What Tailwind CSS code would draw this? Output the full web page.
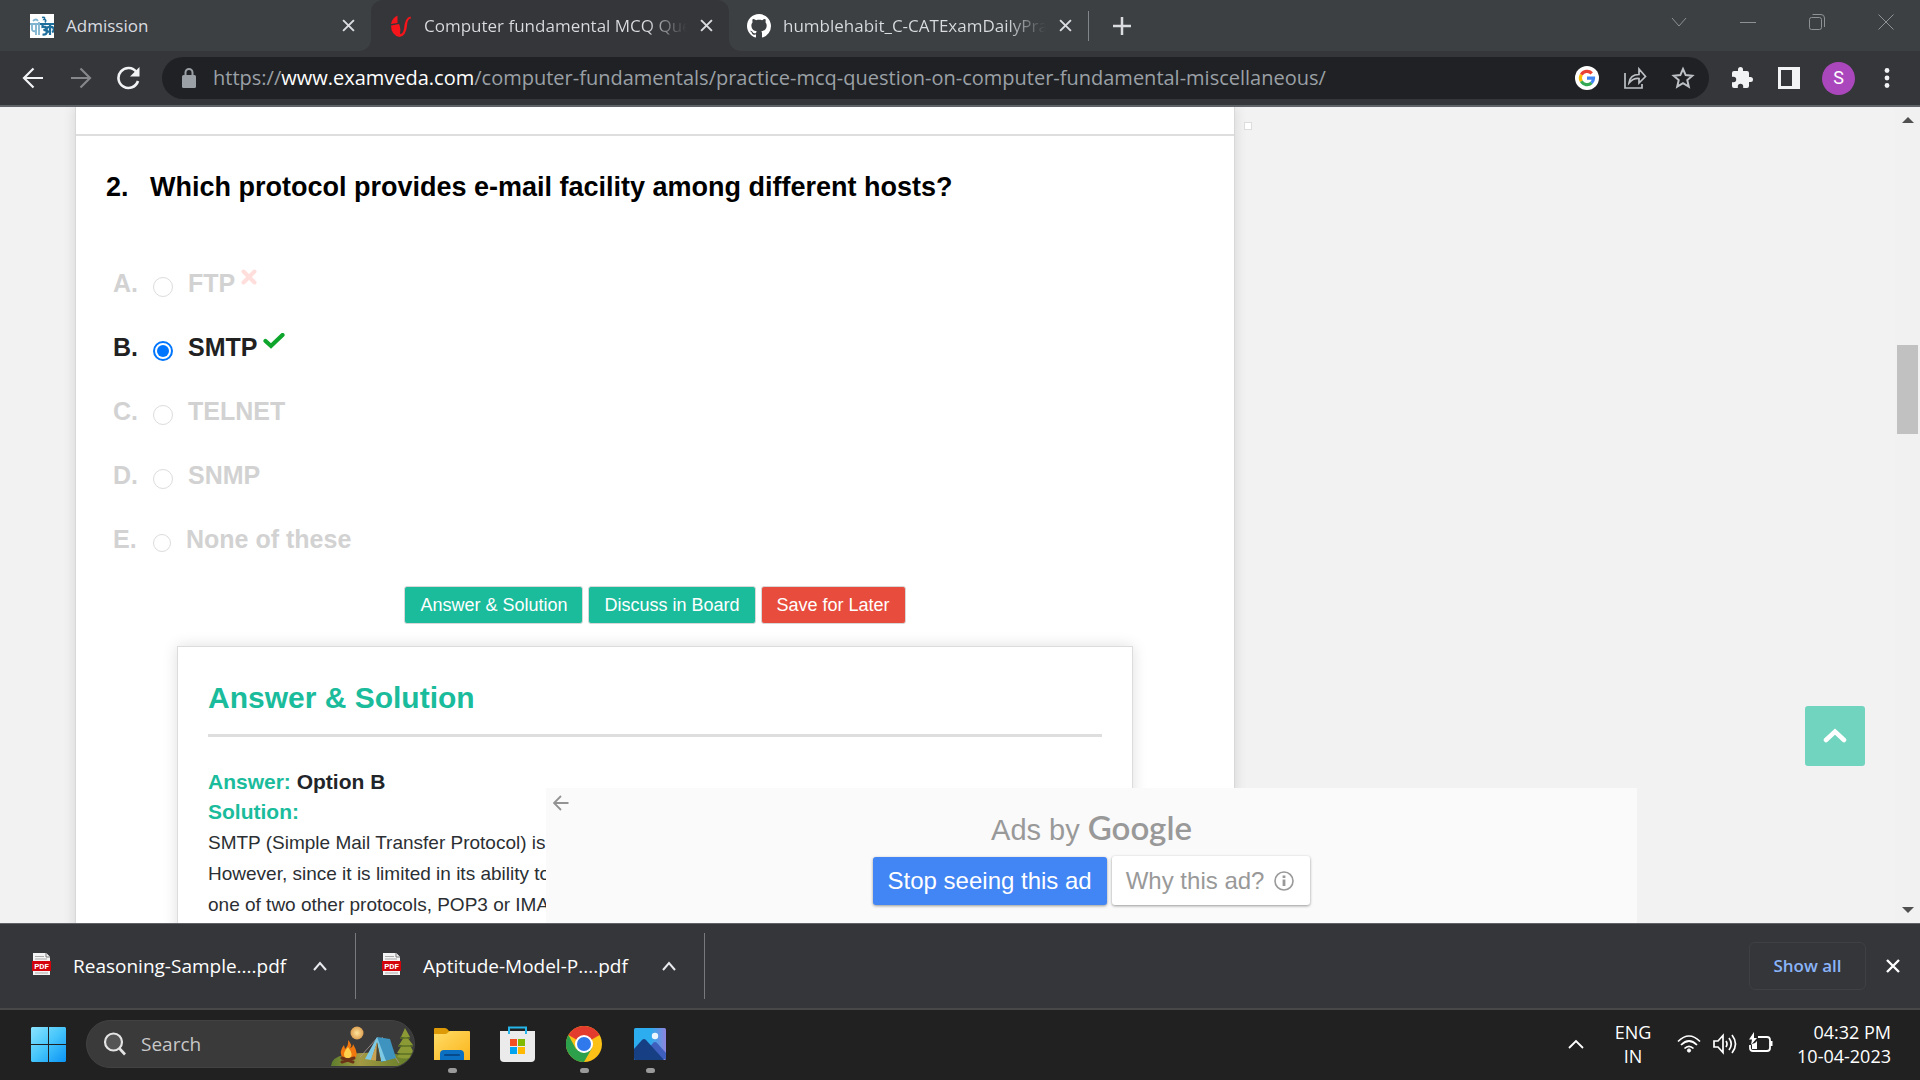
<!DOCTYPE html>
<html lang="en">
<head>
<meta charset="utf-8">
<title>Computer fundamental MCQ Questions</title>
<script src="https://cdn.jsdelivr.net/npm/@tailwindcss/browser@4"></script>
</head>
<body class="h-screen flex flex-col overflow-hidden bg-[#202020] font-['Open_Sans','Noto_Sans',sans-serif] text-[#dadce0]">

<!-- Tab strip -->
<header class="shrink-0 bg-[#35363a]">
  <nav class="h-[51px] flex items-stretch bg-[#35363a]" aria-label="Tabs">
    <div class="w-[371px] shrink-0 flex items-center pl-[30px] pr-[11px] bg-[#3c4043] rounded-br-xl">
      <svg class="size-6 shrink-0" viewBox="0 0 24 24"><rect width="24" height="24" fill="#fff"/><g fill="none" stroke="#7fb4d0" stroke-width="1.800"><path d="M0 10h10M2 10v5q0 3 4 2M6 10v11M9 8v13M3 7q3-3 5 0"/></g><g fill="none" stroke="#1f6f9c" stroke-width="2.200"><path d="M10 10h14M12.500 10v3c5-1 5 2 1 3 5 0 4 5-1 4.500M20 10v11M20 13c-4-1-5 5 0 5M20 13c4-1 5 4 2 5"/><path d="M12 3.500q4-1 2 2 3 0 1 3" stroke-width="1.600"/></g></svg>
      <span class="ml-3 grow text-[17px] leading-6">Admission</span>
      <button aria-label="Close tab" class="size-6 flex items-center justify-center"><svg class="size-[13px]" viewBox="0 0 12 12"><path d="M1 1l10 10M11 1L1 11" stroke="#dadce0" stroke-width="1.800"/></svg></button>
    </div>
    <div class="bg-[#3c4043] flex">
    <div class="w-[358px] shrink-0 flex items-center pl-5 pr-[11px] bg-[#35363a] rounded-t-xl">
      <svg class="w-5 h-6 shrink-0" viewBox="0 0 20 24"><path d="M6.500 1.500V9L0 10Q1 4 6.500 1.500ZM0 11.500L8 10Q10 14 9 20 12 20 13 15 14 3 19.500 2.500L20 4.500Q16.500 4 16 12 15 22 8.500 23 0 21 0 11.500Z" fill="#f5151b"/></svg>
      <span class="ml-[13px] w-[263px] overflow-hidden whitespace-nowrap text-[17px] leading-6 bg-linear-to-r from-[#dadce0] from-85% to-[#35363a] bg-clip-text text-transparent">Computer fundamental MCQ Questions</span>
      <button aria-label="Close tab" class="ml-auto size-6 flex items-center justify-center"><svg class="size-[13px]" viewBox="0 0 12 12"><path d="M1 1l10 10M11 1L1 11" stroke="#dadce0" stroke-width="1.800"/></svg></button>
    </div>
    </div>
    <div class="grow flex items-center bg-[#3c4043] rounded-bl-xl">
      <div class="w-[359px] shrink-0 flex items-center pl-[18px] pr-[11px]">
        <svg class="size-6 shrink-0" viewBox="0 0 16 16" fill="#fff"><path d="M8 0C3.580 0 0 3.580 0 8c0 3.540 2.290 6.530 5.470 7.590.4.070.55-.17.55-.38 0-.19-.01-.82-.01-1.490-2.010.37-2.530-.49-2.690-.94-.09-.23-.48-.94-.82-1.130-.28-.15-.68-.52-.01-.53.63-.01 1.080.58 1.230.82.72 1.210 1.870.87 2.330.66.07-.52.28-.87.51-1.070-1.780-.2-3.640-.89-3.640-3.950 0-.87.31-1.590.82-2.150-.08-.2-.36-1.020.08-2.120 0 0 .67-.21 2.200.82.64-.18 1.320-.27 2-.27s1.360.09 2 .27c1.530-1.040 2.200-.82 2.200-.82.44 1.100.16 1.920.08 2.120.51.56.82 1.270.82 2.150 0 3.070-1.870 3.750-3.650 3.950.29.25.54.73.54 1.480 0 1.070-.01 1.930-.01 2.200 0 .21.15.46.55.38A8.010 8.010 0 0 0 16 8c0-4.420-3.580-8-8-8z"/></svg>
        <span class="ml-3 w-[263px] overflow-hidden whitespace-nowrap text-[17px] leading-6 bg-linear-to-r from-[#dadce0] from-85% to-[#3c4043] bg-clip-text text-transparent">humblehabit_C-CATExamDailyPractice</span>
        <button aria-label="Close tab" class="ml-auto size-6 flex items-center justify-center"><svg class="size-[13px]" viewBox="0 0 12 12"><path d="M1 1l10 10M11 1L1 11" stroke="#dadce0" stroke-width="1.800"/></svg></button>
      </div>
      <div class="w-px h-[30px] bg-[#80868b]"></div>
      <button aria-label="New tab" class="ml-[21px] size-6 flex items-center justify-center"><svg class="size-[18px]" viewBox="0 0 18 18"><path d="M9 0v18M0 9h18" stroke="#dadce0" stroke-width="2.500"/></svg></button>
      <div class="ml-auto mr-[26px] mb-2 flex items-center gap-[53px] text-[#8f9295]">
        <svg class="size-4" viewBox="0 0 16 16" fill="none" stroke="currentColor"><path d="M1 4l7 8 7-8"/></svg>
        <svg class="size-4" viewBox="0 0 16 16" fill="none" stroke="currentColor"><path d="M0 8.500h16"/></svg>
        <svg class="size-4" viewBox="0 0 16 16" fill="none" stroke="currentColor"><rect x=".5" y="3.500" width="12" height="12" rx="2"/><path d="M3.500 .500H12q3.500 0 3.500 3.500v9"/></svg>
        <svg class="size-4" viewBox="0 0 16 16" fill="none" stroke="currentColor"><path d="M.5.500l15 15M15.500.500l-15 15"/></svg>
      </div>
    </div>
  </nav>

  <!-- Toolbar -->
  <div class="h-[56px] flex items-center pl-[21px] pr-[21px] border-b-2 border-[#5f6368]">
    <div class="flex gap-6 text-[#f1f3f4]">
      <button aria-label="Back"><svg class="size-6" viewBox="0 0 24 24" fill="none" stroke="currentColor" stroke-width="2.200"><path d="M22 12H3M12.500 2.500L3 12l9.500 9.500"/></svg></button>
      <button aria-label="Forward" class="text-[#85878a]"><svg class="size-6" viewBox="0 0 24 24" fill="none" stroke="currentColor" stroke-width="2.200"><path d="M2 12h19M11.500 2.500L21 12l-9.500 9.500"/></svg></button>
      <button aria-label="Reload"><svg class="size-6" viewBox="0 0 24 24"><path d="M19.500 6A10 10 0 1 0 21 15" fill="none" stroke="currentColor" stroke-width="2.600"/><path d="M22.500 1v9.500H13z" fill="currentColor"/></svg></button>
    </div>
    <div class="ml-[21px] grow h-[42px] rounded-full bg-[#202124] flex items-center pl-5 pr-3.5">
      <svg class="w-[14px] h-5 shrink-0" viewBox="0 0 14 20"><rect y="7" width="14" height="13" rx="1.500" fill="#9aa0a6"/><path d="M3.500 8V4.500a3.500 3.500 0 0 1 7 0V8" fill="none" stroke="#9aa0a6" stroke-width="2"/></svg>
      <a href="#" class="ml-[17px] whitespace-nowrap text-[20px] leading-7 text-[#9aa0a6]">https://<span class="text-white">www.examveda.com</span>/computer-fundamentals/practice-mcq-question-on-computer-fundamental-miscellaneous/</a>
      <div class="ml-auto flex gap-6">
        <svg class="size-6" viewBox="0 0 24 24"><circle cx="12" cy="12" r="12" fill="#fff"/><g fill="none" stroke-width="3.200"><path d="M6.300 8.700A6.600 6.600 0 0 1 16.800 7.300" stroke="#ea4335"/><path d="M6.300 8.700a6.600 6.600 0 0 0 0 6.600" stroke="#fbbc05"/><path d="M6.300 15.300A6.600 6.600 0 0 0 16.500 16.900" stroke="#34a853"/><path d="M12 12.200h6.500a6.600 6.600 0 0 1-2 4.700" stroke="#4285f4"/></g></svg>
        <svg class="size-6" viewBox="0 0 24 24" fill="none" stroke="#bdc1c6" stroke-width="1.700"><path d="M2 7v15h17v-4M6 17Q7 8.500 16 8.500V3l6.500 7.500L16 17v-4.500Q10 12 6 17z"/></svg>
        <svg class="size-6" viewBox="0 0 24 24" fill="none" stroke="#bdc1c6" stroke-width="2"><path d="M12 3l2.700 6.100 6.600.6-5 4.400 1.500 6.600L12 17.200l-5.800 3.500 1.500-6.600-5-4.400 6.600-.6z"/></svg>
      </div>
    </div>
    <div class="ml-[21px] flex items-center gap-5 text-[#f1f3f4]">
      <button aria-label="Extensions"><svg class="size-6" viewBox="0 0 24 24"><path fill="currentColor" d="M20.500 11H19V7a2 2 0 0 0-2-2h-4V3.500a2.500 2.500 0 0 0-5 0V5H4a2 2 0 0 0-2 2v3.800h1.500a2.700 2.700 0 0 1 0 5.400H2V20a2 2 0 0 0 2 2h3.800v-1.500a2.700 2.700 0 0 1 5.400 0V22H17a2 2 0 0 0 2-2v-4h1.500a2.500 2.500 0 0 0 0-5z"/></svg></button>
      <button aria-label="Side panel" class="ml-1"><svg class="size-[22px]" viewBox="0 0 22 22"><rect width="22" height="22" fill="currentColor"/><rect x="3" y="3" width="11" height="16" fill="#35363a"/></svg></button>
      <button class="size-[33px] ml-0.5 rounded-full bg-[#ab47bc] text-[18px] leading-none text-white font-[Roboto,sans-serif]">S</button>
      <button aria-label="Menu"><svg class="size-6" viewBox="0 0 24 24" fill="currentColor"><circle cx="12" cy="4.500" r="2.400"/><circle cx="12" cy="12" r="2.400"/><circle cx="12" cy="19.500" r="2.400"/></svg></button>
    </div>
  </div>
</header>

<!-- Web page -->
<div class="relative grow min-h-0 flex overflow-hidden bg-[#f2f2f2] font-['Liberation_Sans',Arial,sans-serif]">
  <main class="grow min-w-0 pl-[75px] grid grid-cols-[1160fr_660fr] overflow-hidden">
    <div class="bg-white border-x border-[#d8d8d8] shadow-[0_0_12px_rgba(0,0,0,0.12)]">
      <div class="h-[29px] border-b-2 border-[#dedede]"></div>
      <section class="px-[30px] pt-[35px]">
        <h2 class="flex text-[27px] leading-8 font-bold text-black"><span class="w-11">2.</span><span>Which protocol provides e-mail facility among different hosts?</span></h2>
        <div class="mt-12 pl-[7px] text-[25px] leading-8 font-bold text-[#d2d2d2]">
          <label class="h-16 flex items-center"><span class="w-10">A.</span><input type="radio" name="q2" class="mt-2 appearance-none size-5 rounded-full border border-[#dcdcdc]"><span class="ml-[15px]">FTP</span><svg class="ml-1.5 mb-3 size-4" viewBox="0 0 16 16"><path d="M2.500 2.500l11 11M13.500 2.500l-11 11" stroke="#ffdedb" stroke-width="4" stroke-linecap="round"/></svg></label>
          <label class="h-16 flex items-center text-[#212121]"><span class="w-10">B.</span><input type="radio" name="q2" checked class="mt-2 appearance-none size-5 rounded-full border-2 border-[#0075ff] bg-[#0075ff] bg-clip-content p-[2px]"><span class="ml-[15px]">SMTP</span><svg class="ml-1.5 mb-3 w-[22px] h-4" viewBox="0 0 22 16"><path d="M2.500 8l5.500 5L19.500 2" fill="none" stroke="#0da52b" stroke-width="4.200" stroke-linecap="round"/></svg></label>
          <label class="h-16 flex items-center"><span class="w-10">C.</span><input type="radio" name="q2" class="mt-2 appearance-none size-5 rounded-full border border-[#dcdcdc]"><span class="ml-[15px]">TELNET</span></label>
          <label class="h-16 flex items-center"><span class="w-10">D.</span><input type="radio" name="q2" class="mt-2 appearance-none size-5 rounded-full border border-[#dcdcdc]"><span class="ml-[15px]">SNMP</span></label>
          <label class="h-16 flex items-center"><span class="w-10">E.</span><input type="radio" name="q2" class="mt-2 appearance-none size-[18px] rounded-full border border-[#dcdcdc]"><span class="ml-[15px]">None of these</span></label>
        </div>
        <div class="mt-[15px] flex justify-center gap-[5px] text-[18px] leading-6 text-white whitespace-nowrap">
          <button class="h-[38px] px-[15px] rounded-[3px] border border-[#d8d8d8] bg-[#1abc9c]">Answer &amp; Solution</button>
          <button class="h-[38px] px-[15px] rounded-[3px] border border-[#d8d8d8] bg-[#1abc9c]">Discuss in Board</button>
          <button class="h-[38px] px-[15px] rounded-[3px] border border-[#d8d8d8] bg-[#e74c3c]">Save for Later</button>
        </div>
        <article class="mt-[22px] mx-[71px] h-[400px] border border-[#dcdcdc] shadow-[0_0_14px_rgba(0,0,0,0.13)] px-[30px] pt-[31px]">
          <h3 class="text-[30px] leading-10 font-bold text-[#1abc9c] pb-4 border-b-3 border-[#dedede]">Answer &amp; Solution</h3>
          <p class="mt-[30px] text-[21px] leading-[30px] font-bold text-[#212529]"><span class="text-[#1abc9c]">Answer:</span> Option B<br><span class="text-[#1abc9c]">Solution:</span></p>
          <p class="text-[19px] leading-[31px] text-[#2b2f33] whitespace-nowrap overflow-hidden">SMTP (Simple Mail Transfer Protocol) is a TCP/IP protocol used in sending e-mail.<br>However, since it is limited in its ability to queue messages, it is used with<br>one of two other protocols, POP3 or IMAP.</p>
        </article>
      </section>
    </div>
    <aside class="pt-[15px] pl-[9px]"><div class="w-2 h-2 border border-[#dcdcdc] bg-white"></div></aside>
  </main>
  <div class="w-[25px] shrink-0 bg-[#f1f1f1] flex flex-col items-center py-2.5">
    <svg class="w-3 h-1.5" viewBox="0 0 12 6"><path d="M0 6l6-6 6 6z" fill="#505050"/></svg>
    <div class="mt-[222px] w-[21px] h-[89px] bg-[#c1c1c1]"></div>
    <svg class="mt-auto w-3 h-1.5" viewBox="0 0 12 6"><path d="M0 0l6 6 6-6z" fill="#505050"/></svg>
  </div>

  <button aria-label="Back to top" class="absolute right-[55px] bottom-[157px] size-15 rounded-[3px] bg-[#71d4bf] flex items-center justify-center"><svg class="w-[24px] h-[16px]" viewBox="0 0 24 16"><path d="M3 12l9-8.500 9 8.500" fill="none" stroke="#fff" stroke-width="4.500" stroke-linecap="round"/></svg></button>

  <div class="absolute left-[546px] right-[283px] bottom-0 h-[135px] bg-[#fafafa] flex flex-col items-center pt-5 text-[#999]">
    <button aria-label="Dismiss ad" class="absolute left-[7px] top-[7px]"><svg class="size-4" viewBox="0 0 16 16" fill="none" stroke="#939393" stroke-width="1.800"><path d="M15.500 8H1.500M8 1L1 8l7 7"/></svg></button>
    <div class="flex items-baseline leading-[38px]"><span class="text-[29px]">Ads by</span><span class="ml-2 text-[33px] font-semibold font-['Lato',sans-serif]">Google</span></div>
    <div class="mt-[7px] flex items-end gap-[5px] text-[24px] leading-8 whitespace-nowrap">
      <button class="h-12 px-[15px] rounded-[3px] bg-[#4285f4] text-white shadow-[0_1px_3px_rgba(0,0,0,0.4)]">Stop seeing this ad</button>
      <button class="h-[49px] px-3.5 rounded-[3px] bg-white shadow-[0_1px_3px_rgba(0,0,0,0.4)] flex items-center">Why this ad?<svg class="ml-2.5 mr-0.5 size-5" viewBox="0 0 20 20" fill="none" stroke="#999"><circle cx="10" cy="10" r="9" stroke-width="1.600"/><path d="M10 8.500v6.500M10 4.500v2.500" stroke-width="2.800"/></svg></button>
    </div>
  </div>
</div>

<!-- Downloads shelf -->
<footer class="shrink-0 h-[87px] border-t border-b-2 border-t-[#5f6368] border-b-[#484848] bg-[#35363a] flex items-center text-[19px] leading-6 text-white">
  <div class="w-[355px] shrink-0 flex items-center pl-8">
    <svg class="w-[19px] h-6 mb-1 shrink-0" viewBox="0 0 19 24"><path d="M1 1h13l4 4v18H1z" fill="#f4f4f4"/><path d="M14 1v4h4" fill="#f4f4f4" stroke="#777"/><path d="M3 4.500h9M3 7h12M3 21h13" stroke="#aaa"/><rect y="9" width="19" height="10" fill="#d4040c"/><text x="9.500" y="17" text-anchor="middle" font-family="Roboto, sans-serif" font-weight="700" font-size="8" fill="#fff">PDF</text></svg>
    <span class="ml-[22px]">Reasoning-Sample....pdf</span>
    <button aria-label="Options" class="ml-auto mr-7"><svg class="w-3.5 h-3" viewBox="0 0 14 12" fill="none" stroke="#e8eaed" stroke-width="2"><path d="M1 10l6-7 6 7"/></svg></button>
  </div>
  <div class="w-px h-[66px] bg-[#77797c]"></div>
  <div class="w-[348px] shrink-0 flex items-center pl-[26px]">
    <svg class="w-[19px] h-6 mb-1 shrink-0" viewBox="0 0 19 24"><path d="M1 1h13l4 4v18H1z" fill="#f4f4f4"/><path d="M14 1v4h4" fill="#f4f4f4" stroke="#777"/><path d="M3 4.500h9M3 7h12M3 21h13" stroke="#aaa"/><rect y="9" width="19" height="10" fill="#d4040c"/><text x="9.500" y="17" text-anchor="middle" font-family="Roboto, sans-serif" font-weight="700" font-size="8" fill="#fff">PDF</text></svg>
    <span class="ml-[22px]">Aptitude-Model-P....pdf</span>
    <button aria-label="Options" class="ml-auto mr-7"><svg class="w-3.5 h-3" viewBox="0 0 14 12" fill="none" stroke="#e8eaed" stroke-width="2"><path d="M1 10l6-7 6 7"/></svg></button>
  </div>
  <div class="w-px h-[66px] bg-[#77797c]"></div>
  <button class="ml-auto w-[117px] h-12 rounded-md border border-[#3e4044] text-[17px] font-semibold text-[#8ab4f8]">Show all</button>
  <button aria-label="Close downloads" class="ml-5 mr-5"><svg class="size-3.5" viewBox="0 0 14 14"><path d="M1 1l12 12M13 1L1 13" stroke="#fff" stroke-width="2.400"/></svg></button>
</footer>

<!-- Taskbar -->
<nav class="shrink-0 h-[70px] bg-[#212121] flex items-center pl-[31px] pr-[29px] pb-0.5 text-white" aria-label="Taskbar">
  <button aria-label="Start"><svg class="size-[35px]" viewBox="0 0 35 35"><defs><linearGradient id="win" x1="0" y1="0" x2="1" y2="1"><stop offset="0" stop-color="#8be4fd"/><stop offset=".5" stop-color="#45c5fb"/><stop offset="1" stop-color="#0a93f5"/></linearGradient></defs><path fill="url(#win)" d="M1 0h16v17H0V1zM18 0h16l1 1v16H18zM0 18h17v17H1l-1-1zM18 18h17v16l-1 1H18z"/></svg></button>
  <label class="relative ml-5 w-[329px] h-12 rounded-full bg-[#3a3a3a] border border-[#424242] flex items-center pl-4 overflow-hidden">
    <svg class="size-6 shrink-0" viewBox="0 0 24 24" fill="none" stroke="#e4e4e4" stroke-width="2.200"><circle cx="10.500" cy="10" r="8.500" fill="#555"/><path d="M16.500 16.500l5.500 6" stroke-width="2.600"/></svg>
    <input type="text" placeholder="Search" class="ml-3.5 w-24 bg-transparent text-[19px] leading-7 placeholder:text-[#c8c8c8] outline-none">
    <svg class="absolute right-0 bottom-0 w-[84px] h-[44px]" viewBox="0 0 84 44"><defs><radialGradient id="moon"><stop offset="0" stop-color="#ffe49a"/><stop offset="1" stop-color="#dda053"/></radialGradient><linearGradient id="grass"><stop offset="0" stop-color="#5d7d2c"/><stop offset=".35" stop-color="#a39a43"/><stop offset="1" stop-color="#5d7a25"/></linearGradient></defs>
      <path d="M1 43Q2 34 14 32 45 26 84 34V43z" fill="url(#grass)"/><circle cx="27" cy="10" r="6.500" fill="url(#moon)"/>
      <path d="M75 5l5 9h-3l6 8h-3l4 8h-3l3 4q-8 3-17 0l3-4h-3l5-8h-3l5-8h-3z" fill="#8c9a36"/><path d="M70 15h10M68 23h15M68 31h15" stroke="#5b7024" stroke-width="1.500"/>
      <path d="M48 14L30 34M52 14l17 26" stroke="#a99" stroke-width=".8"/><path d="M47 14l13 2 6 19-15 4z" fill="#3f94bf"/><path d="M47 14L35 36l6 1 6-17 4 18 5 0z" fill="#7ecae5"/><path d="M47 19L41 37l10 1z" fill="#c9a254"/><path d="M47 19l-1 19 5 0z" fill="#4c4634"/>
      <path d="M18 17q5 5 2 8 3-1 3-4 6 10 2 14H13q-5-6 1-13l1 4q4-4 3-9z" fill="#f0780f"/><path d="M18 24q6 8 2 11h-5q-3-5 3-11z" fill="#ffd24d"/><path d="M12 35l11 4M12 39l12-4" stroke="#6d3317" stroke-width="3" stroke-linecap="round"/></svg>
  </label>
  <div class="ml-[19px] flex items-center gap-[30px]">
    <button aria-label="File Explorer" class="relative"><svg class="size-9" viewBox="0 0 36 36"><defs><linearGradient id="fold" x1="0" y1="0" x2="1" y2="1"><stop offset="0" stop-color="#ffdc67"/><stop offset="1" stop-color="#fbb51b"/></linearGradient></defs><path d="M0 3q0-1 1-1h10q2 0 4 3h10v6H0z" fill="#dd9a06"/><path d="M0 8h12l4-3h19q1 0 1 1v28H0z" fill="url(#fold)"/><path d="M6 34V28q0-4 4-4h16q4 0 4 4v6z" fill="#0b6fc2"/><path d="M11 29h14" stroke="#074a8c" stroke-width="2" stroke-linecap="round"/></svg><span class="absolute left-[14px] top-[42px] w-[9px] h-[5px] rounded-full bg-[#9a9a9a]"></span></button>
    <button aria-label="Microsoft Store"><svg class="size-9" viewBox="0 0 36 36"><path d="M0 5h35v27q0 4-4 4H4q-4 0-4-4z" fill="#ebebeb"/><path d="M9 8V1.500h17V8" fill="none" stroke="#25b5e8" stroke-width="2"/><path d="M10 13h7v7h-7z" fill="#f25022"/><path d="M18 13h7v7h-7z" fill="#7fba00"/><path d="M10 21h7v7h-7z" fill="#00a4ef"/><path d="M18 21h7v7h-7z" fill="#ffb900"/></svg></button>
    <button aria-label="Chrome" class="relative"><svg class="size-9" viewBox="0 0 36 36"><circle cx="18" cy="18" r="18" fill="#fbc116"/><path d="M18 18L2.410 9A18 18 0 0 1 33.600 9z" fill="#e33b2e"/><path d="M2.410 9A18 18 0 0 0 18 36l8-14-8 5-8-4z" fill="#2da04c"/><path d="M18 9h15.600L30 7 18 5z" fill="#e33b2e"/><circle cx="18" cy="18" r="9" fill="#fff"/><circle cx="18" cy="18" r="7" fill="#3079ed"/></svg><span class="absolute left-[14px] top-[42px] w-[9px] h-[5px] rounded-full bg-[#9a9a9a]"></span></button>
    <button aria-label="Photos" class="relative"><svg class="size-9" viewBox="0 0 36 36"><defs><linearGradient id="sky"><stop offset=".5" stop-color="#2badef"/><stop offset="1" stop-color="#8d85dd"/></linearGradient></defs><rect x="2" y="2" width="32" height="32" rx="1.500" fill="url(#sky)"/><path d="M17 22l4-5q2-2 4 0l9 10v6H17z" fill="#3f5fbe"/><path d="M2 23l8-9q2-2 4 0l18 20H3.500Q2 34 2 32z" fill="#173f84"/><circle cx="23" cy="10" r="3.200" fill="#eef6fd"/></svg><span class="absolute left-[14px] top-[42px] w-[9px] h-[5px] rounded-full bg-[#9a9a9a]"></span></button>
  </div>
  <div class="ml-auto flex items-center text-[18px] leading-6 font-['Open_Sans','Noto_Sans',sans-serif]">
    <svg class="w-4 h-3" viewBox="0 0 16 12" fill="none" stroke="#fff" stroke-width="1.800"><path d="M1 10l7-7 7 7"/></svg>
    <div class="ml-[29px] w-10 text-center">ENG<br>IN</div>
    <div class="ml-6 flex items-center gap-3">
      <svg class="size-6" viewBox="0 0 24 24" fill="none" stroke="#fff" stroke-width="1.700"><path d="M1 9.500Q12-1.500 23 9.500M4 13q8-8 16 0M7.500 16.500q4.500-4.500 9 0"/><circle cx="12" cy="18.500" r="1.600" fill="#fff" stroke-width="1"/></svg>
      <svg class="size-6" viewBox="0 0 24 24" fill="none" stroke="#fff" stroke-width="1.700"><path d="M1 9h4l5-5.500v17L5 15H1zM13 9q2 3 0 6M16 6q4.500 6 0 12M19 3q7 9 0 18"/></svg>
      <svg class="size-6" viewBox="0 0 24 24" fill="none" stroke="#fff" stroke-width="1.800"><path d="M9 5h9q3 0 3 3v8q0 3-3 3H4q-3 0-3-3v-3"/><path d="M21 9h2.500v5H21z" fill="#fff" stroke="none"/><path d="M5 0L0 7.500h3L2 13l6-7H5zM3 12l3-1 2-2v8H3z" fill="#fff" stroke="none"/></svg>
    </div>
    <div class="ml-6 text-right">04:32 PM<br>10-04-2023</div>
  </div>
</nav>
</body>
</html>
